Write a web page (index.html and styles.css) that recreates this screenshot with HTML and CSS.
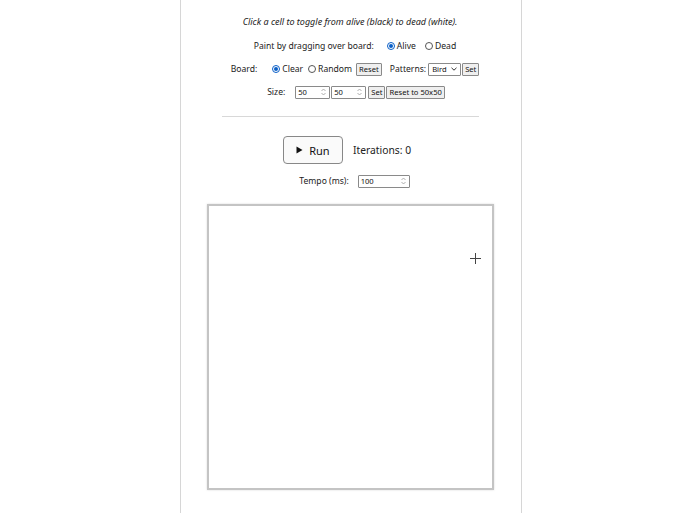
FILE: index.html
```html
<!DOCTYPE html>
<html>
<head>
<meta charset="utf-8">
<link rel="stylesheet" href="styles.css">
</head>
<body>
<div class="page">
  <p class="hint">Click a cell to toggle from alive (black) to dead (white).</p>
  <div class="row paint">
    <span class="label">Paint by dragging over board:</span>
    <span class="radio-group">
      <span class="opt"><span class="radio on"></span>Alive</span>
      <span class="opt"><span class="radio"></span>Dead</span>
    </span>
  </div>
  <div class="row boardrow">
    <span class="label">Board:</span>
    <span class="radio-group">
      <span class="opt"><span class="radio on"></span>Clear</span>
      <span class="opt"><span class="radio"></span>Random</span>
    </span>
    <button class="btn">Reset</button>
    <span class="label patterns">Patterns:</span>
    <span class="select">Bird<svg class="chev" width="6" height="4" viewBox="0 0 6 4"><path d="M0.5 0.8 L3 3.2 L5.5 0.8" fill="none" stroke="#333" stroke-width="1"/></svg></span>
    <button class="btn">Set</button>
  </div>
  <div class="row sizerow">
    <span class="label">Size:</span>
    <span class="num"><input value="50"><svg width="7" height="8" viewBox="0 0 7 8"><path d="M1.5 3 L3.5 1 L5.5 3 M1.5 5 L3.5 7 L5.5 5" fill="none" stroke="#999" stroke-width="0.8"/></svg></span>
    <span class="num"><input value="50"><svg width="7" height="8" viewBox="0 0 7 8"><path d="M1.5 3 L3.5 1 L5.5 3 M1.5 5 L3.5 7 L5.5 5" fill="none" stroke="#999" stroke-width="0.8"/></svg></span>
    <button class="btn">Set</button>
    <button class="btn">Reset to 50x50</button>
  </div>
  <hr class="sep">
  <div class="row runrow">
    <button class="run"><svg width="7" height="8" viewBox="0 0 7 8"><path d="M0.5 0.5 L6.5 4 L0.5 7.5 Z" fill="#111"/></svg>Run</button>
    <span class="iter">Iterations: 0</span>
  </div>
  <div class="row temporow">
    <span class="label">Tempo (ms):</span>
    <span class="num tempo"><input value="100"><svg width="7" height="8" viewBox="0 0 7 8"><path d="M1.5 3 L3.5 1 L5.5 3 M1.5 5 L3.5 7 L5.5 5" fill="none" stroke="#999" stroke-width="0.8"/></svg></span>
  </div>
  <div class="boardwrap">
    <div class="board">
      <svg class="cursor" width="11" height="11" viewBox="0 0 11 11"><path d="M5.5 0 V11 M0 5.5 H11" stroke="#444" stroke-width="1"/></svg>
    </div>
  </div>
</div>
</body>
</html>
```
FILE: styles.css
```css
html, body {
  margin: 0;
  padding: 0;
  background: #fff;
}
body {
  font-family: "Noto Sans", "Open Sans", sans-serif;
  color: #222;
  font-size: 8.6px;
  padding-left: 2px;
}
.page {
  width: 342px;
  margin: 0 auto;
  padding-right: 2px;
  border-left: 1px solid #d6d6d6;
  border-right: 1px solid #d6d6d6;
  min-height: 513px;
  box-sizing: border-box;
  display: flex;
  flex-direction: column;
  align-items: center;
}
.hint {
  margin: 15px 0 0;
  font-style: italic;
  font-size: 9px;
  line-height: 14px;
  color: #222;
}
.row {
  display: flex;
  align-items: center;
  justify-content: center;
}
.paint {
  margin-top: 10px;
  height: 14px;
  padding-left: 10px;
}
.label {
  line-height: 14px;
}
.radio-group {
  display: flex;
  align-items: center;
  gap: 9px;
}
.paint .radio-group {
  margin-left: 13px;
}
.opt {
  display: flex;
  align-items: center;
  gap: 2px;
}
.radio {
  width: 8px;
  height: 8px;
  box-sizing: border-box;
  border: 1px solid #555;
  border-radius: 50%;
  position: relative;
}
.radio.on {
  border-color: #0a5fc7;
}
.radio.on::after {
  content: "";
  position: absolute;
  left: 1px;
  top: 1px;
  width: 4px;
  height: 4px;
  border-radius: 50%;
  background: #0a5fc7;
}
.boardrow {
  margin-top: 9px;
  height: 14px;
  padding-left: 10px;
}
.boardrow .radio-group {
  margin-left: 15px;
  gap: 5px;
}
.btn {
  font-family: inherit;
  font-size: 7.6px;
  height: 13px;
  line-height: 11px;
  padding: 0 2px;
  margin: 0 0 0 1px;
  border: 1px solid #8a8a8a;
  border-radius: 1px;
  background: #efefef;
  color: #111;
}
.boardrow .btn:first-of-type {
  margin-left: 4px;
}
.patterns {
  margin-left: 8px;
  margin-right: 2px;
}
.select {
  display: flex;
  align-items: center;
  justify-content: space-between;
  width: 33px;
  height: 13px;
  box-sizing: border-box;
  border: 1px solid #8a8a8a;
  border-radius: 1px;
  padding: 0 3px;
  font-size: 7.6px;
  color: #111;
}
.sizerow {
  margin-top: 9px;
  height: 14px;
  padding-left: 12px;
}
.sizerow .label {
  margin-right: 10px;
}
.num {
  display: flex;
  align-items: center;
  justify-content: space-between;
  width: 35px;
  height: 13px;
  box-sizing: border-box;
  border: 1px solid #8a8a8a;
  border-radius: 1px;
  padding: 0 2px 0 2px;
  margin-right: 1px;
  background: #fff;
}
.num input {
  width: 20px;
  border: 0;
  padding: 0;
  margin: 0;
  font-family: inherit;
  font-size: 7.6px;
  color: #111;
  outline: none;
  background: transparent;
}
.sep {
  width: 257px;
  margin: 17px 0 0;
  border: 0;
  border-top: 1px solid #d8d8d8;
  height: 0;
}
.runrow {
  margin-top: 19px;
  gap: 10px;
  padding-right: 6px;
}
.run {
  display: flex;
  align-items: center;
  justify-content: center;
  gap: 6px;
  width: 60px;
  height: 28px;
  border: 1px solid #888;
  border-radius: 4px;
  background: #fafafa;
  font-family: inherit;
  font-size: 11px;
  color: #111;
  padding: 0;
}
.iter {
  font-size: 10.3px;
  color: #222;
}
.temporow {
  margin-top: 10px;
  gap: 9px;
  padding-left: 10px;
}
.tempo {
  width: 52px;
}
.boardwrap {
  margin-top: 16px;
}
.board {
  position: relative;
  width: 287px;
  height: 286px;
  box-sizing: border-box;
  border: 2px solid #c4c4c4;
  background: #fff;
  box-shadow: 0 0 2px rgba(0,0,0,0.15);
}
.cursor {
  position: absolute;
  left: 261px;
  top: 47px;
}
```
